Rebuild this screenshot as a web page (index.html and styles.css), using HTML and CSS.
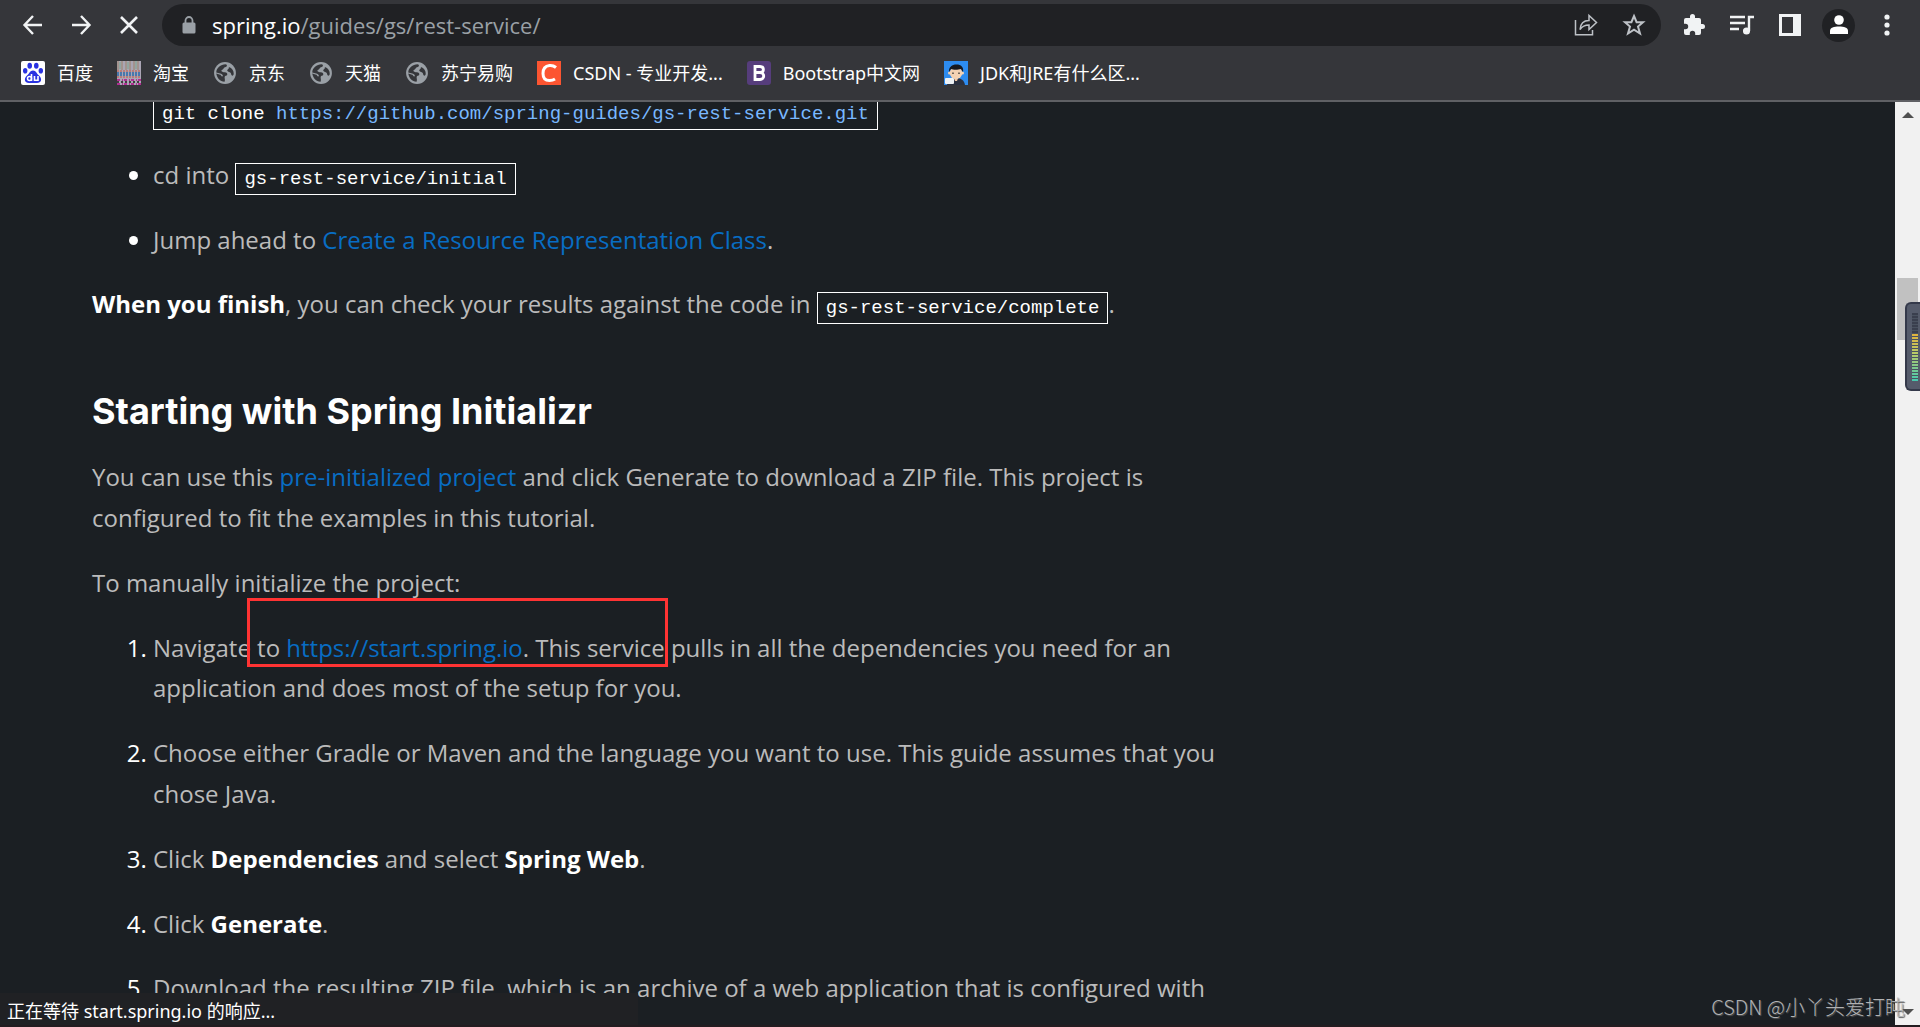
FILE: index.html
```html
<!DOCTYPE html>
<html lang="zh-CN">
<head>
<meta charset="utf-8">
<title>Building a RESTful Web Service</title>
<link rel="stylesheet" href="styles.css">
</head>
<body>
<svg class="defs" width="0" height="0" aria-hidden="true">
  <symbol id="globe" viewBox="-1 -1 22 22">
    <circle cx="10" cy="10" r="10" fill="#9aa0a6"/>
    <path d="M2 9.500C2 5.500 6 2 10.500 2C12.500 2.300 12 4.500 10 4.700C8.500 5 8.700 7 7 7.300C6 8.500 8 9.500 10 9.300C12.500 9.500 12.500 11.500 11.500 12.300C10 12.500 9.500 13.500 9.700 14.500C10 16 10 17.500 9.500 18C5.500 17.800 2.500 14.500 2 10.500C4 11.500 6 11 6.500 12.500C7 13.500 8 13.500 8 12C7.500 10.500 4 10 2 9.500ZM13.500 4.500C16.500 5.500 18.200 8 18 11C17.500 13.500 15.500 12.500 15.500 10.500C15 9 12.500 9.500 12 7.800C12 6.500 14 6.500 13.500 4.500Z" fill="#35363a"/>
  </symbol>
</svg>
<header class="browser">
  <div class="toolbar">
    <nav class="history" aria-label="History">
      <button class="tool" aria-label="Back"><svg width="22" height="22" viewBox="0 0 22 22"><path d="M20 11H3M11 2L2.500 11L11 20" fill="none" stroke="#f1f3f4" stroke-width="2.400"/></svg></button>
      <button class="tool" aria-label="Forward"><svg width="22" height="22" viewBox="0 0 22 22"><path d="M2 11H19M11 2L19.500 11L11 20" fill="none" stroke="#f1f3f4" stroke-width="2.400"/></svg></button>
      <button class="tool" aria-label="Stop"><svg width="22" height="22" viewBox="0 0 22 22"><path d="M3 3L19 19M19 3L3 19" fill="none" stroke="#f1f3f4" stroke-width="2.600"/></svg></button>
    </nav>
    <div class="omnibox">
      <svg width="14" height="18" viewBox="0 0 14 18"><path d="M3.500 7V4.500A3.500 3.500 0 0 1 10.500 4.500V7" fill="none" stroke="#9aa0a6" stroke-width="1.800"/><rect x="0.500" y="6.500" width="13" height="11" rx="1.500" fill="#9aa0a6"/></svg>
      <span class="url"><b>spring.io</b>/guides/gs/rest-service/</span>
      <button class="tool" aria-label="Share"><svg width="24" height="24" viewBox="0 0 24 24" fill="none" stroke="#bdc1c6" stroke-width="1.500"><path d="M1.500 7V21.800H18.500V17M6 16.500C6.500 10.500 10 7.500 15 7.500V2.500L22.500 9.500L15 16.500V12C11 12 8 13.500 6 16.500Z"/></svg></button>
      <button class="tool" aria-label="Bookmark"><svg width="24" height="24" viewBox="0 0 24 24"><path d="M12 3L14.600 9.200H21L16 13.600L18 20.500L12 16.700L6 20.500L8 13.600L3 9.200H9.400Z" fill="none" stroke="#bdc1c6" stroke-width="2"/></svg></button>
    </div>
    <div class="actions">
      <button class="tool" aria-label="Extensions"><svg width="24" height="24" viewBox="0 0 24 24"><path fill="#f1f3f4" d="M20.500 11H19V7a2 2 0 0 0-2-2h-4V3.500a2.500 2.500 0 0 0-5 0V5H4a2 2 0 0 0-2 2v3.800h1.500a2.700 2.700 0 0 1 0 5.400H2V20a2 2 0 0 0 2 2h3.800v-1.500a2.700 2.700 0 0 1 5.400 0V22H17a2 2 0 0 0 2-2v-4h1.500a2.500 2.500 0 0 0 0-5z"/></svg></button>
      <button class="tool" aria-label="Media"><svg width="24" height="24" viewBox="0 0 24 24" fill="none" stroke="#f1f3f4" stroke-width="2.400"><path d="M0 4H15M0 10H15M0 16H9M19 18V4H24"/><circle cx="16.500" cy="18" r="2.800" fill="#f1f3f4" stroke-width="1.500"/></svg></button>
      <button class="tool" aria-label="Side panel"><svg width="24" height="24" viewBox="0 0 24 24"><path fill="#f1f3f4" fill-rule="evenodd" d="M1 1H23V23H1ZM4 4V20H15V4Z"/></svg></button>
      <button class="tool avatar" aria-label="Profile"><svg width="22" height="22" viewBox="0 0 22 22" fill="#fff"><circle cx="11" cy="6" r="4.800"/><path d="M2 20V17C2 13.500 6 12.500 11 12.500S20 13.500 20 17V20Z"/></svg></button>
      <button class="tool" aria-label="Menu"><svg width="24" height="24" viewBox="0 0 24 24" fill="#f1f3f4"><circle cx="12" cy="4" r="2.600"/><circle cx="12" cy="12" r="2.600"/><circle cx="12" cy="20" r="2.600"/></svg></button>
    </div>
  </div>
  <nav class="bookmarks" aria-label="Bookmarks">
    <a href="#"><svg width="24" height="24" viewBox="0 0 24 24"><rect width="24" height="24" rx="2" fill="#fff"/><g fill="#2932e1"><ellipse cx="8.700" cy="4.800" rx="2.300" ry="3"/><ellipse cx="15.300" cy="4.800" rx="2.300" ry="3"/><ellipse cx="4.200" cy="9.800" rx="2.200" ry="2.800"/><ellipse cx="19.800" cy="9.800" rx="2.200" ry="2.800"/><path d="M12 9.500C15 9.500 15.500 12.500 18 14.500C21.500 17.500 20.500 22 16 22H8C3.500 22 2.500 17.500 6 14.500C8.500 12.500 9 9.500 12 9.500Z"/></g><path d="M10.500 13V20M13.500 15V19.300H17V15" stroke="#fff" stroke-width="1.600" fill="none"/><circle cx="8.500" cy="17.500" r="2" fill="none" stroke="#fff" stroke-width="1.500"/></svg>百度</a>
    <a href="#"><svg width="24" height="24" viewBox="0 0 24 24"><rect width="24" height="24" fill="#aaa5b4"/><path d="M1 0V9M5 0V9M9 0V9M13 0V9M17 0V9M21 0V9" stroke="#9a8069"/><path d="M3 1V8M11 1V8M19 0V8" stroke="#7ba68c"/><path d="M0 10H24M0 16H24" stroke="#c7553f" stroke-dasharray="2 1"/><path d="M0 13H24" stroke="#4778ad" stroke-width="4" stroke-dasharray="2 1"/><path d="M0 19H24M0 23H24" stroke="#b02f92" stroke-width="2" stroke-dasharray="3 2 1 1"/><path d="M0 21H24" stroke="#3b443e" stroke-width="2" stroke-dasharray="2 2"/></svg>淘宝</a>
    <a href="#"><svg class="world"><use href="#globe"/></svg>京东</a>
    <a href="#"><svg class="world"><use href="#globe"/></svg>天猫</a>
    <a href="#"><svg class="world"><use href="#globe"/></svg>苏宁易购</a>
    <a href="#"><svg width="24" height="24" viewBox="0 0 24 24"><rect width="24" height="24" fill="#fc5531"/><path d="M19 6.500C17 4.800 14.500 4.300 12.500 4.500C8 5 6 8.500 6 12.500C6 17 8.500 19.500 12.500 19.500C15 19.500 16.500 19 18 18" fill="none" stroke="#fff" stroke-width="3"/></svg>CSDN - 专业开发...</a>
    <a href="#"><svg width="24" height="24" viewBox="0 0 24 24"><rect width="24" height="24" rx="3" fill="#563d7c"/><path d="M8 5.500H13C17.500 5.500 17.500 11.500 13 11.500H8M13 11.500C18 11.500 18 18.500 13 18.500H8M8 4V20" fill="none" stroke="#fff" stroke-width="2.800"/></svg>Bootstrap中文网</a>
    <a href="#"><svg width="24" height="24" viewBox="0 0 24 24"><rect width="24" height="24" fill="#2d8cf0"/><path d="M3 24C4 19 7 17 12 17S20 19 21 24Z" fill="#2b3140"/><path d="M9.500 16H14.500L13 20H11Z" fill="#f2c9a8"/><circle cx="5.500" cy="12" r="1.500" fill="#f4d2b4"/><circle cx="18.500" cy="12" r="1.500" fill="#f4d2b4"/><ellipse cx="12" cy="12" rx="6.300" ry="6" fill="#f4d2b4"/><path d="M5 11C4.500 6 8 3.500 12.500 3.500C17 3.500 20 6 19 11L17 8C14 9 9 9 7 8Z" fill="#17191f"/><path d="M9 11.500V13M15 11.500V13" stroke="#222" stroke-width="1.200"/><rect x="1" y="17" width="9" height="6" rx="1" fill="#eef2f5"/></svg>JDK和JRE有什么区...</a>
  </nav>
</header>
<div class="viewport">
  <main class="page">
    <article class="guide">
      <ul>
        <li class="continued"><p><code>git clone <a href="#">https://github.com/spring-guides/gs-rest-service.git</a></code></p></li>
        <li><p>cd into <code>gs-rest-service/initial</code></p></li>
        <li><p>Jump ahead to <a href="#">Create a Resource Representation Class</a>.</p></li>
      </ul>
      <p><strong>When you finish</strong>, you can check your results against the code in <code>gs-rest-service/complete</code>.</p>
      <h2>Starting with Spring Initializr</h2>
      <p>You can use this <a href="#">pre-initialized project</a> and click Generate to download a ZIP file. This project is configured to fit the examples in this tutorial.</p>
      <p>To manually initialize the project:</p>
      <ol>
        <li><p>Navigate <span class="marked">to <a href="#">https://start.spring.io</a>. This service</span> pulls in all the dependencies you need for an application and does most of the setup for you.</p></li>
        <li><p>Choose either Gradle or Maven and the language you want to use. This guide assumes that you chose Java.</p></li>
        <li><p>Click <strong>Dependencies</strong> and select <strong>Spring Web</strong>.</p></li>
        <li><p>Click <strong>Generate</strong>.</p></li>
        <li><p>Download the resulting ZIP file, which is an archive of a web application that is configured with</p></li>
      </ol>
    </article>
  </main>
  <div class="scrollbar">
    <svg width="12" height="6" viewBox="0 0 12 6"><path d="M0 6L6 0L12 6Z" fill="#505050"/></svg>
    <div class="track"><div class="thumb"></div></div>
    <svg width="12" height="6" viewBox="0 0 12 6"><path d="M0 0L6 6L12 0Z" fill="#505050"/></svg>
  </div>
  <div class="meter"><div class="bars"></div></div>
  <div class="status">正在等待 start.spring.io 的响应...</div>
  <div class="watermark">CSDN @小丫头爱打盹</div>
</div>
</body>
</html>
```
FILE: styles.css
```css
* { box-sizing: border-box; }

body {
  margin: 0;
  height: 100vh;
  display: flex;
  flex-direction: column;
  overflow: hidden;
  background: #1b1f23;
  border-bottom: 2px solid #231c20;
  color: #bbb;
  font-family: "Open Sans", "Noto Sans CJK SC", sans-serif;
}

.defs { position: absolute; }
svg { flex: none; display: block; }

/* browser chrome */
.browser {
  flex: none;
  background: #35363a;
  border-bottom: 2px solid #5f6064;
  color: #fff;
}

.toolbar {
  display: flex;
  align-items: center;
  gap: 21px;
  padding: 4px 21px;
}

.tool {
  display: flex;
  align-items: center;
  justify-content: center;
  width: 24px;
  height: 24px;
  padding: 0;
  border: 0;
  background: none;
}

.history { display: flex; gap: 24px; }

.omnibox {
  flex: 1;
  display: flex;
  align-items: center;
  gap: 24px;
  height: 42px;
  padding: 0 15px 0 20px;
  border-radius: 21px;
  background: #202124;
}

.url {
  flex: 1;
  margin-left: -8px;
  color: #9aa0a6;
  font-size: 22px;
}
.url b { color: #fff; font-weight: 400; }

.actions { display: flex; align-items: center; gap: 24px; }
.avatar {
  width: 33px;
  height: 33px;
  margin: 0 -4px;
  border-radius: 50%;
  background: #202124;
}

.bookmarks {
  display: flex;
  align-items: center;
  gap: 24px;
  height: 50px;
  padding: 0 21px 4px;
}
.bookmarks a {
  display: flex;
  align-items: center;
  gap: 12px;
  color: #fff;
  font-family: "Noto Sans", "Noto Sans CJK SC", sans-serif;
  font-size: 18px;
  line-height: 24px;
  text-decoration: none;
  white-space: nowrap;
}
.world { width: 24px; height: 24px; }

/* page */
.viewport {
  flex: 1;
  min-height: 0;
  display: flex;
  position: relative;
}

.page { flex: 1; min-width: 0; overflow: hidden; }

.guide {
  max-width: 1242px;
  margin-top: -12px;
  padding-left: 92px;
  font-size: 24px;
  line-height: 1.7;
}

.guide p { margin: 0 0 24px; }
.guide a { color: #086dc3; text-decoration: none; }
.guide strong { color: #fff; font-weight: 700; }

.guide ul, .guide ol { margin: 0; padding-left: 61px; }
.guide li::marker { color: #fff; }
.guide .continued { list-style: none; }

.guide h2 {
  margin: 64px 0 24px;
  color: #fff;
  font-family: Inter, sans-serif;
  font-size: 36px;
  font-weight: 700;
  line-height: 44px;
}

.guide code {
  padding: 4px 8px;
  border: 1px solid #fff;
  color: #fff;
  font-family: "Liberation Mono", monospace;
  font-size: 19px;
  line-height: 1;
}
.guide code a { color: #79b8ff; }

/* annotation frame laid over the first step */
.marked { position: relative; }
.marked::after {
  content: "";
  position: absolute;
  inset: -33px -3px -3px -10px;
  border: 3px solid #ff3333;
}

.scrollbar {
  display: flex;
  flex-direction: column;
  align-items: center;
  width: 25px;
  padding: 10px 0;
  background: #f1f1f1;
}
.track { flex: 1; align-self: stretch; padding: 160px 2px 0; }
.thumb { height: 62px; background: #c1c1c1; }

.meter {
  position: absolute;
  top: 200px;
  right: 0;
  width: 15px;
  height: 89px;
  padding: 9px 2px 8px 5px;
  border: 2px solid #34394a;
  border-right: 0;
  border-radius: 6px 0 0 6px;
  background: #555b6b;
}
.bars {
  height: 100%;
  background:
    repeating-linear-gradient(transparent 0 2px, #4a5260 2px 3px),
    linear-gradient(#3a3f4e 30%, #e3b23c 30%, #b7cb6a 60%, #46c8b0);
}

.status {
  position: absolute;
  left: 0;
  bottom: 0;
  width: 638px;
  height: 32px;
  padding-left: 7px;
  background: #202124;
  color: #fff;
  font-family: "Noto Sans", "Noto Sans CJK SC", sans-serif;
  font-size: 18px;
  line-height: 36px;
}

.watermark {
  position: absolute;
  right: 15px;
  bottom: 4px;
  color: #b0b2b4;
  font-family: "Noto Sans CJK SC", sans-serif;
  font-size: 20px;
  font-weight: 300;
  line-height: 28px;
  text-shadow: 1px 1px 1px #555;
}
```
